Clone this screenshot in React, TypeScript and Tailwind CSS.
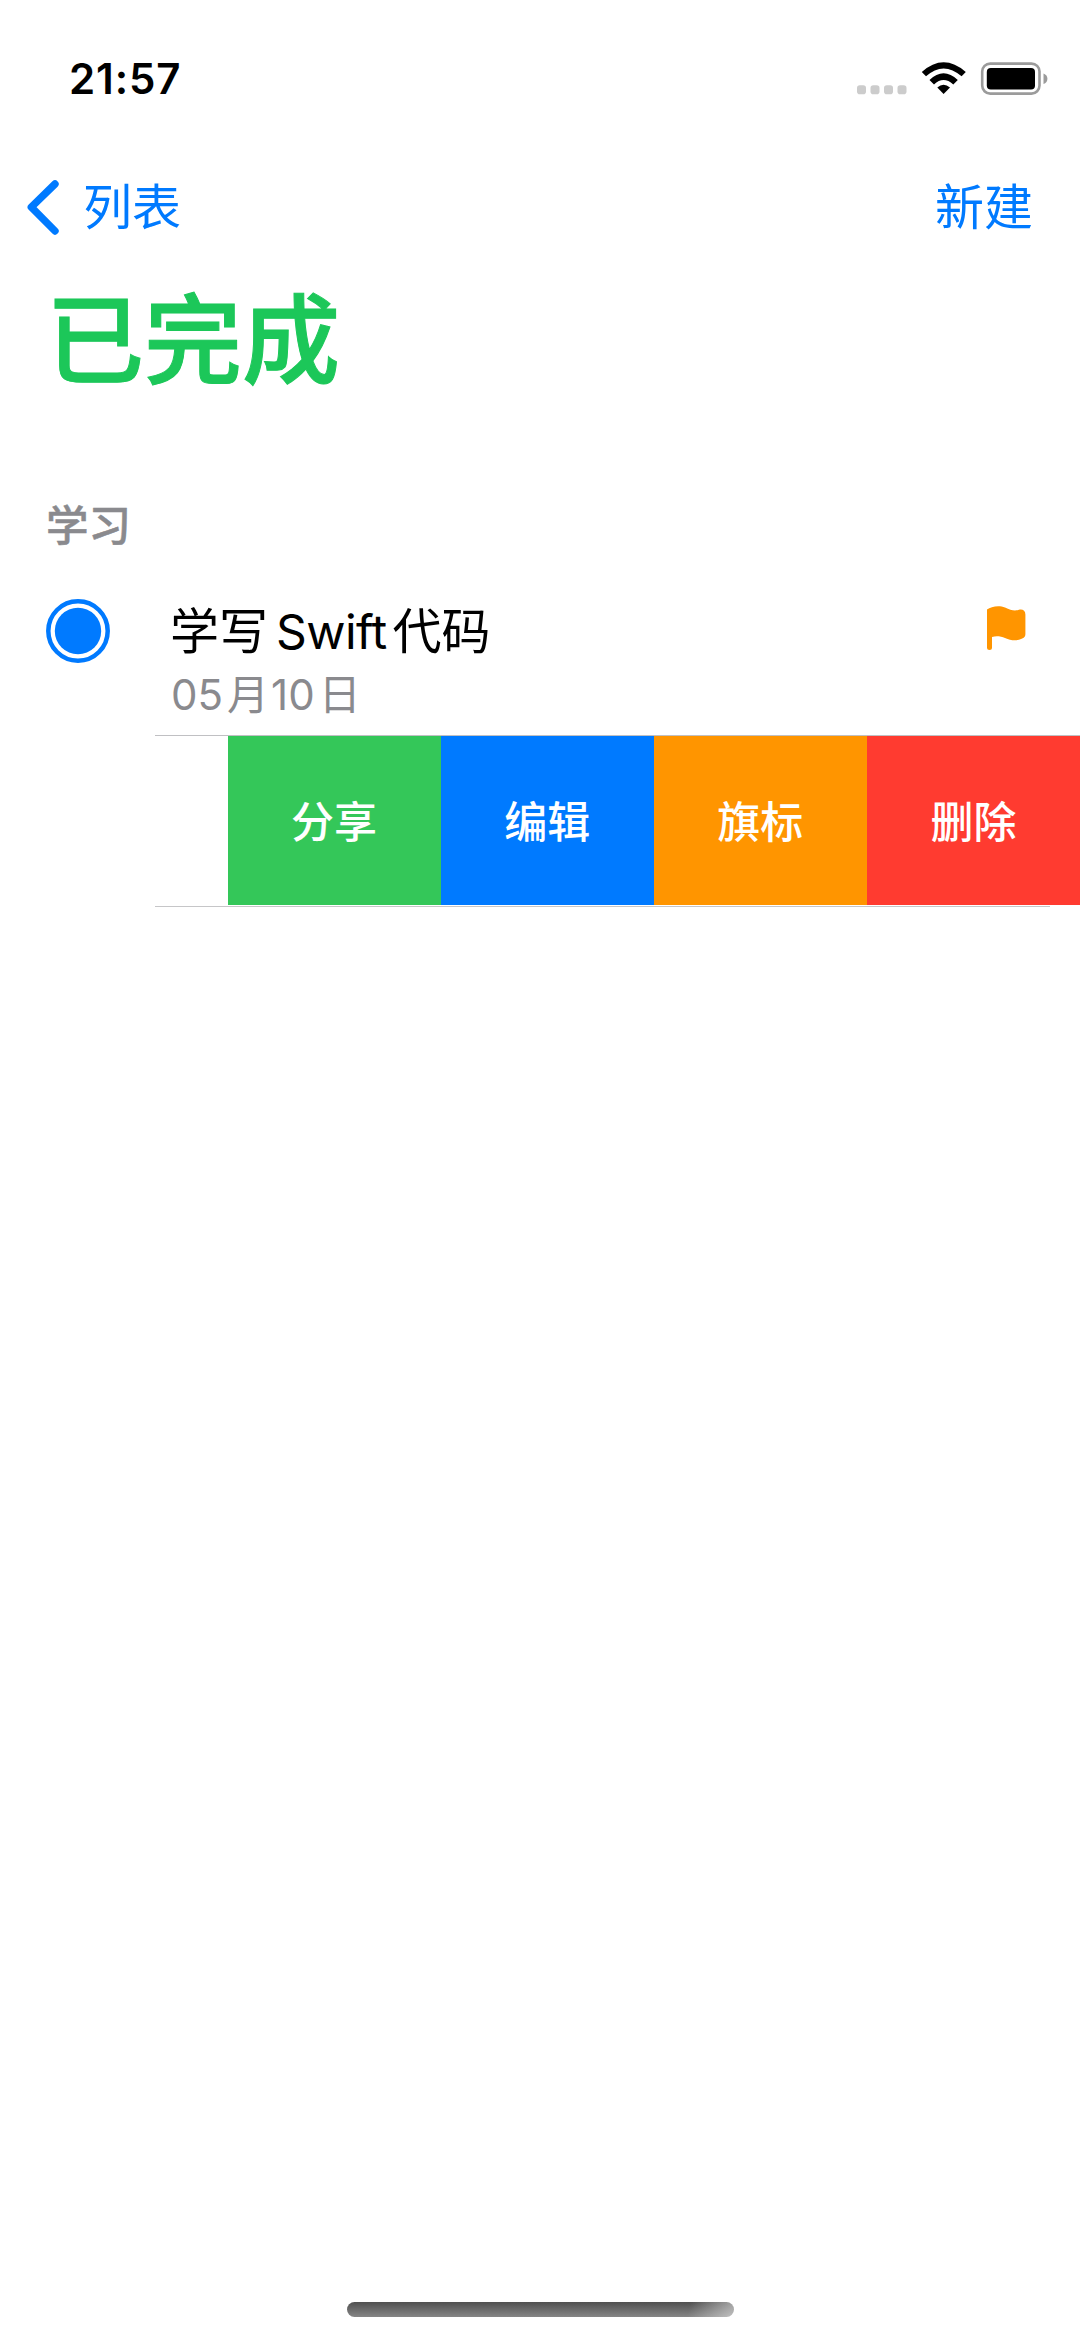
import React from "react";

const actions = [
  { label: "分享", color: "bg-[#34c759]" },
  { label: "编辑", color: "bg-[#007aff]" },
  { label: "旗标", color: "bg-[#ff9500]" },
  { label: "删除", color: "bg-[#ff3b30]" },
];

function StatusBar() {
  return (
    <div className="flex h-[160px] items-start justify-between pl-[69px] pr-[32px] pt-[54px] text-black">
      <span className="text-[42px] font-semibold leading-[50px] tracking-[0.9px]">21:57</span>
      <svg className="mt-[8px]" width="192" height="34" viewBox="856 62 192 34">
        <g fill="#cccccc">
          <rect x="857" y="85.2" width="9" height="9" rx="2.8" />
          <rect x="870.5" y="85.2" width="9" height="9" rx="2.8" />
          <rect x="884" y="85.2" width="9" height="9" rx="2.8" />
          <rect x="897.5" y="85.2" width="9" height="9" rx="2.8" />
        </g>
        <path d="M921.8 72 Q943.5 52.6 965.8 72 L961.6 76.3 Q943.5 60.5 926 76.3 Z" />
        <path d="M929.5 80 Q943.5 66.6 957.8 80 L953.3 84.4 Q943.5 75.6 934 84.4 Z" />
        <path d="M937.3 87.4 Q943.5 82 950 87.4 L943.6 94 Z" />
        <rect x="982.2" y="63.6" width="57.3" height="30" rx="8" fill="none" stroke="#9b9b9b" strokeWidth="2.6" />
        <rect x="986.8" y="68" width="48.2" height="21.4" rx="4" />
        <path d="M1043.5 73.5 Q1047.4 75 1047.4 78.7 Q1047.4 82.5 1043.5 84 Z" fill="#9b9b9b" />
      </svg>
    </div>
  );
}

function NavBar() {
  return (
    <nav className="flex h-[94px] items-center justify-between pl-[26px] pr-[47px] text-[#007aff]">
      <button className="flex items-center">
        <svg width="34" height="56" viewBox="26 179 34 56" fill="none" stroke="currentColor" strokeWidth="7.4" strokeLinecap="round" strokeLinejoin="round">
          <path d="M55 184 L31.3 207.2 L55 231" />
        </svg>
        <span className="ml-[23px] pt-[2px] text-[49px] leading-[60px]">列表</span>
      </button>
      <button className="pt-[2px] text-[49px] leading-[60px]">新建</button>
    </nav>
  );
}

function TaskRow() {
  return (
    <div className="flex h-[171px] items-start pl-[46px] pr-[54px]">
      <svg className="mt-[35px]" width="64" height="64" viewBox="0 0 64 64">
        <circle cx="32" cy="32" r="29.7" fill="none" stroke="#007aff" strokeWidth="4.5" />
        <circle cx="32" cy="32" r="23.2" fill="#007aff" />
      </svg>
      <div className="ml-[60px] mt-[35px] flex-1">
        <div className="flex h-[66px] items-center text-[49px] leading-[66px] text-black">
          <span>学写</span>
          <span className="ml-[8px] text-[48px] tracking-[-0.6px]">Swift</span>
          <span className="ml-[6px]">代码</span>
        </div>
        <div className="flex h-[60px] items-center pl-px text-[42px] leading-[60px] text-[#8a8a8e]">
          <span>05</span>
          <span className="ml-[4px]">月</span>
          <span className="ml-[2px]">10</span>
          <span className="ml-[4px]">日</span>
        </div>
      </div>
      <svg className="mt-[41px]" width="40" height="46" viewBox="985 605 40 46" fill="#ff9500">
        <path d="M986 609.5 C990 606.5 998 605 1004 607.5 C1010 610 1013 611.5 1018 609.8 C1021.5 609 1024.4 610.5 1024.4 614.5 V634 C1024.4 637.5 1022 638.5 1018 639.8 C1013 641 1009 640 1004 638 C1000 636.4 995.5 635.6 991 637 V647.5 A2.5 2.5 0 0 1 986 647.5 Z" />
      </svg>
    </div>
  );
}

function SwipedRow() {
  return (
    <div className="ml-[155px]">
      <div className="h-px bg-[#c0c0c3]" />
      <div className="ml-[72.5px] flex h-[169px]">
        {actions.map((a) => (
          <button key={a.label} className={`flex flex-1 items-center justify-center pt-[4px] text-[43px] font-medium text-white ${a.color}`}>
            {a.label}
          </button>
        ))}
      </div>
      <div className="mr-[30px] mt-px h-px bg-[#c6c6c8]" />
    </div>
  );
}

export default function App() {
  return (
    <div className="flex h-[2340px] w-[1080px] flex-col overflow-hidden bg-white font-['Inter','Noto_Sans_CJK_SC',sans-serif]" lang="zh-CN">
      <StatusBar />
      <NavBar />
      <h1 className="ml-[46px] mt-[27px] h-[120px] text-[98px] font-medium leading-[120px] text-[#1cc759] [-webkit-text-stroke:1px_#1cc759]">已完成</h1>
      <h2 className="ml-[46px] mt-[95px] h-[60px] text-[42.5px] font-medium leading-[60px] text-[#8a8a8e] [-webkit-text-stroke:0.5px_#8a8a8e]">学习</h2>
      <div className="mt-[8px]">
        <TaskRow />
        <SwipedRow />
      </div>
      <div className="mx-auto mb-[23px] mt-auto h-[15px] w-[387px] rounded-full bg-[linear-gradient(100deg,transparent_88%,rgba(255,255,255,0.45)_99%),linear-gradient(to_bottom,#505050,#858585)]" />
    </div>
  );
}
